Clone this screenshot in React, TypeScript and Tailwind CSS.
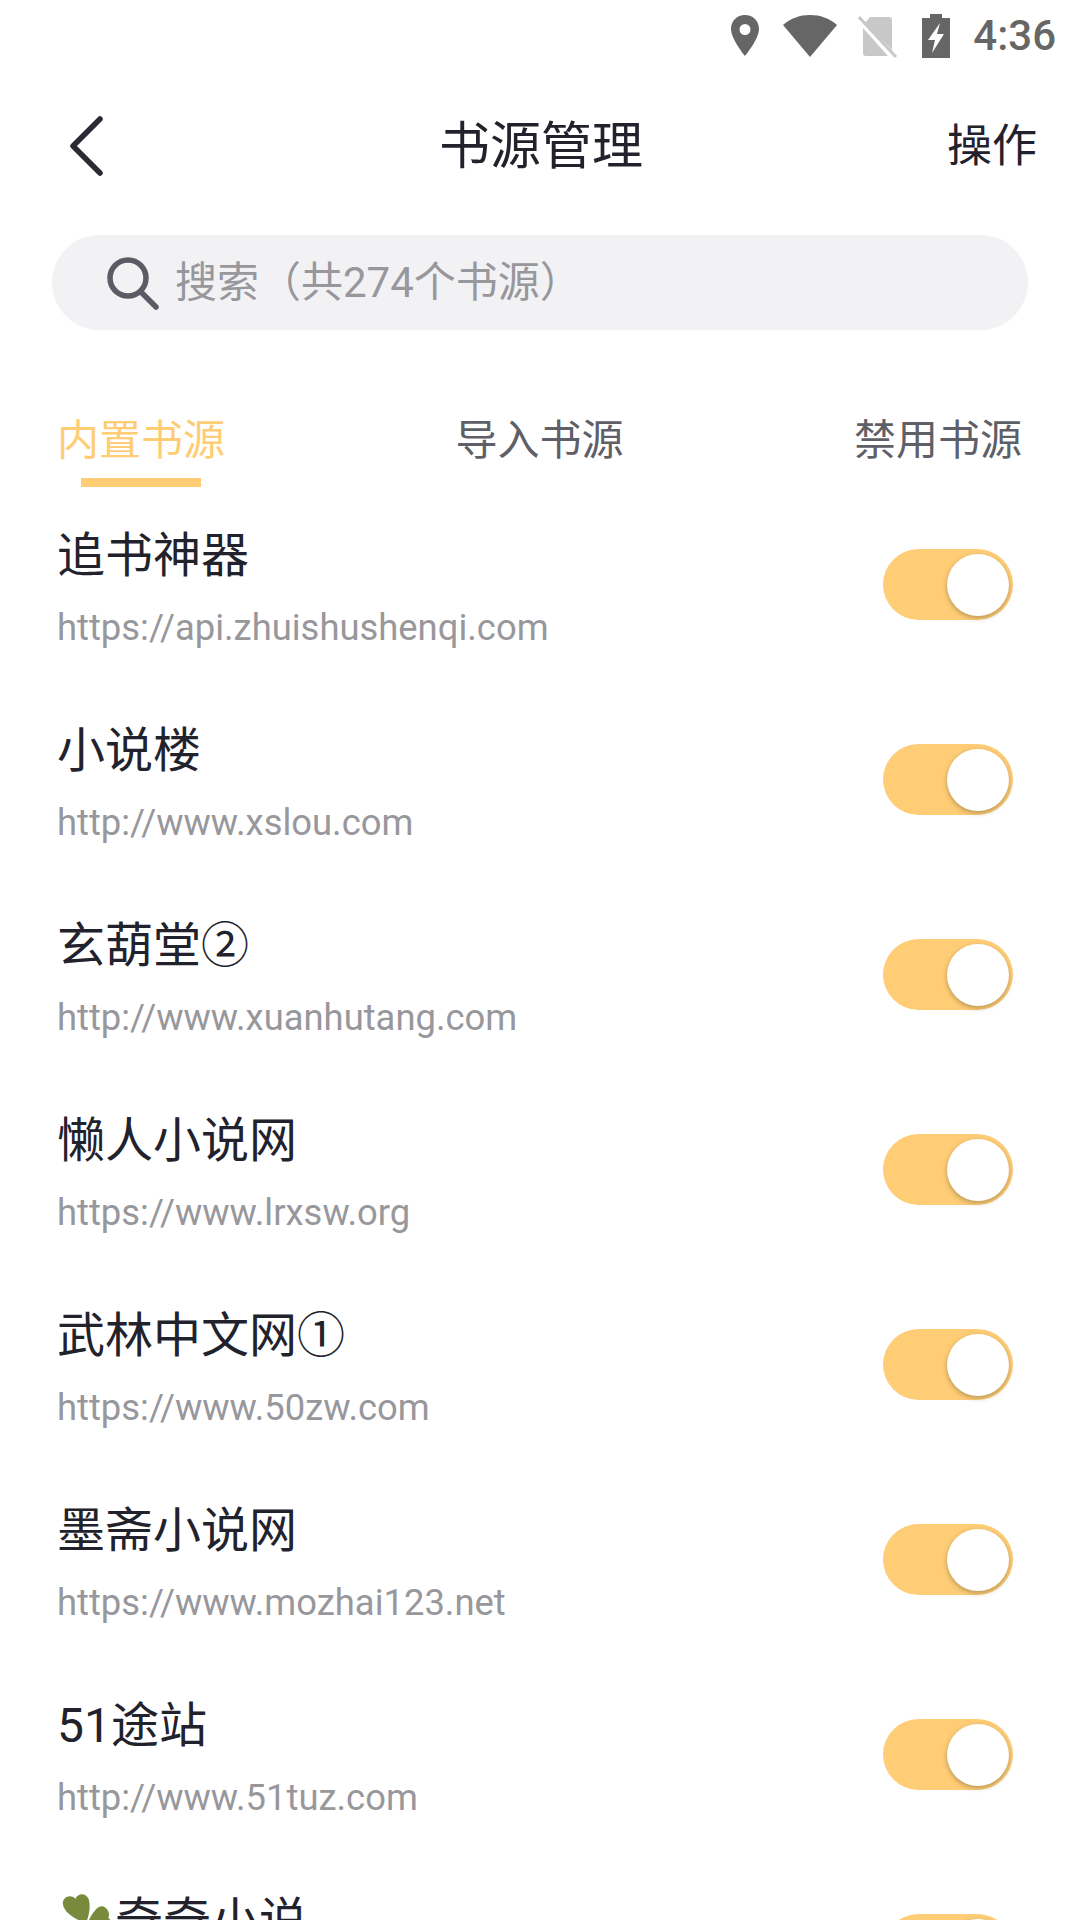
const sources = [
  { name: "追书神器", url: "https://api.zhuishushenqi.com" },
  { name: "小说楼", url: "http://www.xslou.com" },
  { name: "玄葫堂②", url: "http://www.xuanhutang.com" },
  { name: "懒人小说网", url: "https://www.lrxsw.org" },
  { name: "武林中文网①", url: "https://www.50zw.com" },
  { name: "墨斋小说网", url: "https://www.mozhai123.net" },
  { name: "51途站", url: "http://www.51tuz.com" },
  { name: "奇奇小说", url: "", clover: true },
];

function Clover() {
  return (
    <svg width="58" height="60" viewBox="0 0 60 60" className="shrink-0">
      <g fill="#7a8a3c">
        <path d="M30 32C20 29 7 22 6 12 6 5 14 2 19 7 22 0 31 1 33 8 35 16 33 25 30 32Z" />
        <path d="M31 33C35 25 41 13 48 15 53 17 55 23 53 27 58 30 58 38 53 41 46 45 37 39 31 33Z" />
        <path d="M29 33C22 31 10 33 7 40 5 46 10 50 15 49 16 55 24 57 28 52 32 46 31 39 29 33Z" />
      </g>
    </svg>
  );
}

function Toggle() {
  return (
    <div className="flex h-[71px] w-[130px] shrink-0 items-center justify-end rounded-full bg-[#fecd76] pr-[4px]">
      <div className="h-[62px] w-[62px] rounded-full bg-white shadow-[0_2px_5px_rgba(100,80,40,0.45)]" />
    </div>
  );
}

function StatusBar() {
  return (
    <div className="flex h-[72px] items-center justify-end pr-[24px]">
      <svg width="30" height="44" viewBox="0 0 30 44">
        <path fillRule="evenodd" fill="#666" d="M15 1C7 1 1 7 1 15c0 10 14 27 14 27s14-17 14-27C29 7 23 1 15 1Zm0 9a5.500 5.500 0 1 1 0 11 5.500 5.500 0 0 1 0-11Z" />
      </svg>
      <svg width="54" height="44" viewBox="0 0 54 44" className="ml-[23px]">
        <path fill="#666" d="M0 11C8 4 17 1 27 1s19 3 27 10L27 43Z" />
      </svg>
      <svg width="40" height="44" viewBox="0 0 40 44" className="ml-[21px]">
        <path fill="#c8c8c8" d="M12 3h19a3 3 0 0 1 3 3v30L7 9v0l5-6ZM5 14l25 28H8a3 3 0 0 1-3-3Z" />
        <path stroke="#c8c8c8" strokeWidth="3" d="M1 3l37 40" />
      </svg>
      <svg width="28" height="44" viewBox="0 0 28 44" className="ml-[24px]">
        <path fill="#666" fillRule="evenodd" d="M8 0h12v4h8v40H0V4h8Zm10 9L6 26h7l-3 13 12-19h-7Z" />
      </svg>
      <span className="ml-[23px] font-['Roboto',sans-serif] text-[42px] leading-none font-medium text-[#666]">4:36</span>
    </div>
  );
}

export default function App() {
  return (
    <div className="h-[1920px] w-[1080px] overflow-hidden bg-white font-['Roboto','Noto_Sans_CJK_SC',sans-serif]">
      <StatusBar />

      {/* header */}
      <div className="grid h-[150px] grid-cols-[1fr_auto_1fr] items-center pl-[68px] pr-[43px]">
        <svg width="36" height="62" viewBox="0 0 36 62" fill="none" className="mt-[-3px]">
          <path d="M32 4 5 31l27 27" stroke="#2a2a35" strokeWidth="5.500" strokeLinecap="round" strokeLinejoin="round" />
        </svg>
        <span className="ml-[-23px] text-[51px] text-[#22222c]">书源管理</span>
        <span className="justify-self-end text-[45px] text-[#22222c]">操作</span>
      </div>

      {/* search */}
      <div className="mx-[52px] mt-[13px] flex h-[95px] items-center rounded-full bg-[#f2f2f4] pl-[54px]">
        <svg width="54" height="54" viewBox="0 0 54 54" fill="none" className="shrink-0">
          <circle cx="22" cy="22" r="18" stroke="#5b5b65" strokeWidth="5.500" />
          <path d="M35 36 50 51" stroke="#5b5b65" strokeWidth="5.500" strokeLinecap="round" />
        </svg>
        <span className="ml-[15px] text-[42px] text-[#97979c]">搜索（共274个书源）</span>
      </div>

      {/* tabs */}
      <div className="mt-[81px] flex justify-between pl-[57px] pr-[58px] text-[42px] leading-[60px] text-[#5f5f68]">
        <div className="relative text-[#fecd76]">
          内置书源
          <div className="absolute left-[24px] top-[67px] h-[9px] w-[120px] bg-[#fecd76]" />
        </div>
        <div>导入书源</div>
        <div>禁用书源</div>
      </div>

      {/* list */}
      <div className="mt-[51px] flex flex-col">
        {sources.map((s) => (
          <div key={s.name} className="flex h-[195px] shrink-0 justify-between pl-[57px] pr-[67px]">
            <div className="flex min-w-0 flex-col">
              <div className="flex h-[68px] items-center text-[48px] text-[#22222c]">
                {s.clover && <Clover />}
                {s.name}
              </div>
              <div className="mt-[14px] text-[36.4px] leading-[48px] text-[#97979c]">{s.url}</div>
            </div>
            <div className="mt-[27px]">
              <Toggle />
            </div>
          </div>
        ))}
      </div>
    </div>
  );
}
